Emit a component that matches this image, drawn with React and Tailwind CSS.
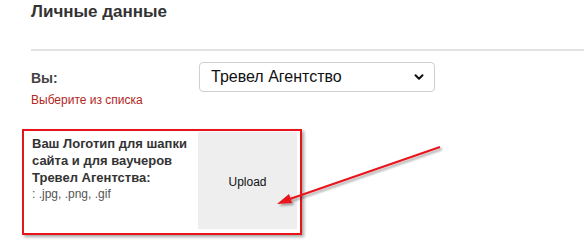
import { ChevronDown } from "lucide-react";

const font = { fontFamily: '"Liberation Sans", Arial, sans-serif' };

function Arrow() {
  return (
    <svg className="pointer-events-none absolute left-0 top-0" width="584" height="247">
      <defs>
        <filter id="sh" x="-20%" y="-20%" width="140%" height="140%">
          <feDropShadow dx="2" dy="2" stdDeviation="1.2" floodColor="#000" floodOpacity="0.35" />
        </filter>
      </defs>
      <g filter="url(#sh)">
        <line x1="440" y1="147" x2="284" y2="201" stroke="#e8141c" strokeWidth="2" />
        <polygon points="277,204 289,194 292,203" fill="#e8141c" />
      </g>
    </svg>
  );
}

export default function App() {
  return (
    <div className="relative h-[247px] w-[584px] overflow-hidden bg-white text-[#333]" style={font}>
      <div className="pl-[31px]">
        <h2 className="h-6 text-[17px] font-bold leading-6 text-[#333]">Личные данные</h2>
        <div className="mt-[25px] h-[2px] bg-[#e2e2e2]" />

        <div className="mt-[11px] flex">
          <div className="w-[168px] pt-[6px]">
            <div className="text-[14px] font-bold leading-5 text-[#444]">Вы:</div>
            <div className="mt-[4px] text-[12px] leading-4 text-[#b3261e]">Выберите из списка</div>
          </div>
          <div className="flex h-[30px] w-[236px] items-center justify-between rounded-[4px] border border-[#cfcfcf] bg-white pl-[11px] pr-[8px]">
            <span className="text-[16px] text-[#111]">Тревел Агентство</span>
            <ChevronDown size={14} strokeWidth={3.5} className="text-[#111]" />
          </div>
        </div>
      </div>

      <div className="ml-[22px] mt-[21px] flex h-[106px] w-[280px] border-2 border-[#e8141c] pb-[4px] pl-[8px] pr-[3px] pt-[1px] shadow-[2px_2px_3px_rgba(0,0,0,0.35)]">
        <div className="flex-1 whitespace-nowrap pt-[3px]">
          <div className="text-[13px] font-bold leading-[17px] text-[#333]">
            Ваш Логотип для шапки
            <br />
            сайта и для ваучеров
            <br />
            Тревел Агентства:
          </div>
          <div className="text-[12px] leading-4 text-[#555]">: .jpg, .png, .gif</div>
        </div>
        <div className="flex w-[99px] items-center justify-center bg-[#eeeeee] pt-[2px] text-[12px] text-[#111]">Upload</div>
      </div>

      <Arrow />
    </div>
  );
}
